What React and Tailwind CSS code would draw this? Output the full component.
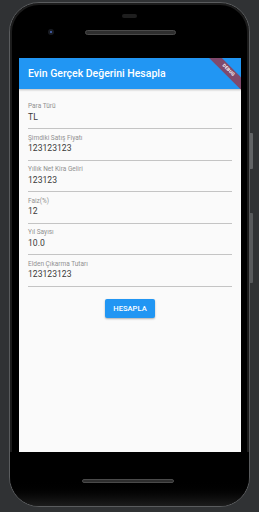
import React from 'react'

const alanlar = [
  { etiket: 'Para Türü', deger: 'TL' },
  { etiket: 'Şimdiki Satış Fiyatı', deger: '123123123' },
  { etiket: 'Yıllık Net Kira Geliri', deger: '123123' },
  { etiket: 'Faiz(%)', deger: '12' },
  { etiket: 'Yıl Sayısı', deger: '10.0' },
  { etiket: 'Elden Çıkarma Tutarı', deger: '123123123' },
]

function Alan({ etiket, deger }) {
  return (
    <div className="border-b border-[#c4c4c4] pb-[5.5px]">
      <div className="text-[6.5px] leading-[9.5px] text-[#919191]">{etiket}</div>
      <div className="text-[8.6px] leading-[11px] text-[#3a3a3a]">{deger}</div>
    </div>
  )
}

export default function App() {
  return (
    <div
      className="w-[259px] h-[512px] bg-[#303234] overflow-hidden pl-[9px] pt-[2px]"
      style={{ fontFamily: 'Roboto, "Noto Sans", sans-serif' }}
    >
      <div className="relative w-[241px] h-[505px] rounded-[30px] bg-black border border-[#5a5c5e] flex flex-col shadow-[inset_0_0_0_2px_#1c1c1c]">
        {/* botões laterais */}
        <div className="absolute right-[-4px] top-[130px] w-[3px] h-[36px] rounded-r-[1px] bg-[#626466]" />
        <div className="absolute right-[-4px] top-[210px] w-[3px] h-[70px] rounded-r-[1px] bg-[#585a5c]" />

        {/* moldura superior */}
        <div className="h-[55px] flex flex-col">
          <div className="mt-[11px] self-center w-[15px] h-[4px] rounded-[2px] bg-[#1e1e1e]" />
          <div className="mt-[11px] flex items-center pl-[38px]">
            <div className="w-[6px] h-[6px] rounded-full bg-[#181b22] flex items-center justify-center">
              <div className="w-[2px] h-[2px] rounded-full bg-[#4a6ac0]" />
            </div>
            <div className="ml-[31px] w-[91px] h-[5px] rounded-[3px] bg-[#2e2e2e] border border-[#4a4a4a]" />
          </div>
        </div>

        {/* tela */}
        <div className="relative ml-[9px] w-[222px] h-[394px] bg-[#fafafa] overflow-hidden">
          <div className="h-[31px] bg-[#2196f3] flex items-center pl-[9px] shadow-[0_1px_2px_rgba(0,0,0,0.25)]">
            <span className="text-[10.5px] font-medium text-white">Evin Gerçek Değerini Hesapla</span>
          </div>

          <div className="absolute left-[183px] top-[8px] w-[52px] h-[9px] rotate-45 bg-[rgba(183,28,28,0.63)] flex items-center justify-center">
            <span className="text-[4.5px] font-bold text-white tracking-[0.2px]">DEBUG</span>
          </div>

          <div className="px-[9px] pt-[13.3px] flex flex-col gap-[4.5px]">
            {alanlar.map(a => (
              <Alan key={a.etiket} etiket={a.etiket} deger={a.deger} />
            ))}
          </div>

          <div className="flex justify-center mt-[12px]">
            <button className="w-[50px] h-[19px] rounded-[2px] bg-[#2196f3] text-white text-[7.6px] font-medium shadow-[0_1px_2px_rgba(0,0,0,0.3)]">
              HESAPLA
            </button>
          </div>
        </div>

        {/* moldura inferior */}
        <div className="flex-1 flex flex-col rounded-b-[29px] bg-gradient-to-b from-black from-50% to-[#1c1c1c]">
          <div className="mt-[27px] ml-[72px] w-[92px] h-[4px] rounded-[2px] bg-[#2e2e2e] border border-[#4a4a4a]" />
        </div>
      </div>
    </div>
  )
}
